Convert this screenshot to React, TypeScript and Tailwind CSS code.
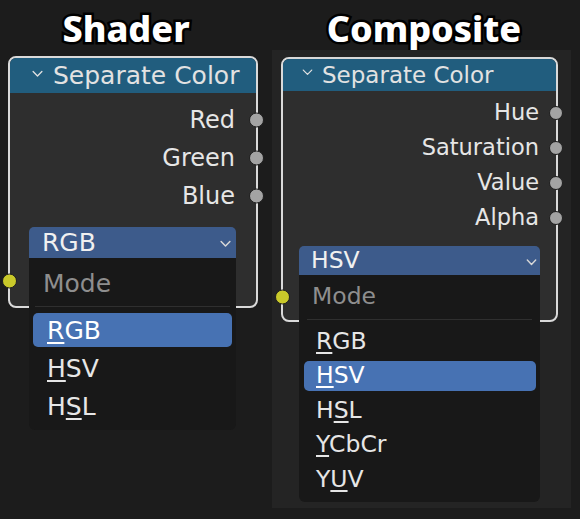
import React from "react";

type Cfg = {
  title: string;
  outputs: string[];
  current: string;
  items: { pre: string; u: string; post: string; sel?: boolean }[];
  c: {
    node: string;
    header: string;
    headerText: string;
    chev: string;
    body: string;
    row: string;
    rowText: string;
    sock: string;
    dd: string;
    ddText: string;
    ddChev: string;
    inRow: string;
    ysock: string;
    menu: string;
    mode: string;
    sep: string;
    list: string;
    item: string;
    itemText: string;
  };
};

const Chevron = ({ className, w = 1.6 }: { className: string; w?: number }) => (
  <svg viewBox="0 0 12 8" className={className} fill="none">
    <polyline
      points="1.2,1.2 6,6.2 10.8,1.2"
      stroke="currentColor"
      strokeWidth={w}
      strokeLinecap="round"
      strokeLinejoin="round"
    />
  </svg>
);

function Node({ cfg }: { cfg: Cfg }) {
  const c = cfg.c;
  return (
    <div className={`relative rounded-[8px] border-2 border-[#dadada] bg-[#2e2e2e] ${c.node}`}>
      <div className={`flex items-center rounded-t-[6px] bg-[#215d7e] text-[#e2e2e2] ${c.header}`}>
        <Chevron className={`shrink-0 text-[#e2e2e2] ${c.chev}`} w={1.4} />
        <span className={`leading-none whitespace-nowrap ${c.headerText}`}>Separate Color</span>
      </div>
      <div className={`flex flex-col ${c.body}`}>
        {cfg.outputs.map((o) => (
          <div key={o} className={`relative flex items-center justify-end ${c.row}`}>
            <span className={`leading-none text-[#e6e6e6] ${c.rowText}`}>{o}</span>
            <span
              className={`absolute top-1/2 -translate-y-1/2 rounded-full bg-[#a3a3a3] border border-[#1e1e1e] ${c.sock}`}
            />
          </div>
        ))}
        <div className={`relative z-10 ${c.dd}`}>
          <div className={`flex h-full items-center justify-between rounded-t-[5px] bg-[#3d5b8b] text-[#f0f0f0] ${c.ddText}`}>
            <span className="leading-none">{cfg.current}</span>
            <Chevron className={`text-[#d8d8d8] ${c.ddChev}`} />
          </div>
          <div className={`absolute left-0 right-0 top-full flex flex-col rounded-b-[6px] bg-[#181818] ${c.menu}`}>
            <div className={`flex items-center leading-none text-[#8e8e8e] ${c.mode}`}>Mode</div>
            <div className={`h-px bg-[#2f2f2f] ${c.sep}`} />
            <div className={`flex flex-col ${c.list}`}>
              {cfg.items.map((it) => (
                <div
                  key={it.pre + it.u + it.post}
                  className={`flex items-center rounded-[5px] leading-none ${c.item} ${
                    it.sel ? "bg-[#4772b3] text-white" : "text-[#e6e6e6]"
                  } ${c.itemText}`}
                >
                  <span>
                    {it.pre}
                    <span className="underline decoration-[1.5px] underline-offset-[3px]">{it.u}</span>
                    {it.post}
                  </span>
                </div>
              ))}
            </div>
          </div>
        </div>
        <div className={`relative ${c.inRow}`}>
          <span
            className={`absolute top-1/2 -translate-y-1/2 rounded-full bg-[#c9c92a] border border-[#1e1e1e] ${c.ysock}`}
          />
        </div>
      </div>
    </div>
  );
}

const left: Cfg = {
  title: "Shader",
  outputs: ["Red", "Green", "Blue"],
  current: "RGB",
  items: [
    { pre: "", u: "R", post: "GB", sel: true },
    { pre: "", u: "H", post: "SV" },
    { pre: "H", u: "S", post: "L" },
  ],
  c: {
    node: "ml-[8px] mt-[9px] w-[250px]",
    header: "h-[35px] pl-[22px] gap-[10px]",
    headerText: "text-[25px]",
    chev: "w-[11px] h-[8px] -mt-[3px]",
    body: "pt-[8px] pb-[6px]",
    row: "h-[38px] pr-[21px]",
    rowText: "text-[24px]",
    sock: "right-[-8px] w-[15px] h-[15px]",
    dd: "mt-[12px] ml-[19px] mr-[20px] h-[31px]",
    ddText: "pl-[13px] pr-[5px] text-[25px]",
    ddChev: "w-[11px] h-[8px] mt-[3px]",
    inRow: "mt-[4px] h-[38px]",
    ysock: "left-[-8px] w-[15px] h-[15px]",
    menu: "pt-[6px] pb-[7px]",
    mode: "h-[38px] pl-[14px] text-[25px]",
    sep: "mt-[4px] mx-[6px]",
    list: "mt-[6px] gap-[4px] px-[4px]",
    item: "h-[34px] pl-[14px]",
    itemText: "text-[25px]",
  },
};

const right: Cfg = {
  title: "Composite",
  outputs: ["Hue", "Saturation", "Value", "Alpha"],
  current: "HSV",
  items: [
    { pre: "", u: "R", post: "GB" },
    { pre: "", u: "H", post: "SV", sel: true },
    { pre: "H", u: "S", post: "L" },
    { pre: "", u: "Y", post: "CbCr" },
    { pre: "Y", u: "U", post: "V" },
  ],
  c: {
    node: "ml-[9px] mt-[7px] w-[277px]",
    header: "h-[32px] pl-[19px] gap-[9px]",
    headerText: "text-[23px]",
    chev: "w-[11px] h-[7px] -mt-[5px]",
    body: "pt-[4px] pb-[6px]",
    row: "h-[35px] pr-[17px]",
    rowText: "text-[22.5px]",
    sock: "right-[-7px] w-[14px] h-[14px]",
    dd: "mt-[11px] ml-[16px] mr-[16px] h-[29px]",
    ddText: "pl-[12px] pr-[3px] text-[23.5px]",
    ddChev: "w-[11px] h-[7px] mt-[3px]",
    inRow: "mt-[4px] h-[35px]",
    ysock: "left-[-8px] w-[15px] h-[15px]",
    menu: "pt-[5px] pb-[7.5px]",
    mode: "h-[34px] pl-[13px] text-[23.5px]",
    sep: "mt-[4.5px] mx-[8px]",
    list: "mt-[7px] gap-[4.5px] pl-[5px] pr-[4px]",
    item: "h-[30px] pl-[12px]",
    itemText: "text-[23.5px]",
  },
};

const Title = ({ text }: { text: string }) => (
  <div className="h-[38px] pt-[1px] text-center text-[36px] leading-[38px] font-extrabold text-white font-['Noto_Sans',sans-serif] [-webkit-text-stroke:5px_#000] [paint-order:stroke_fill]">
    {text}
  </div>
);

export default function App() {
  return (
    <div className="flex w-[580px] h-[519px] overflow-hidden bg-[#1c1c1c] font-['DejaVu_Sans',sans-serif]">
      <div className="flex w-[272px] flex-col pt-[9px]">
        <div className="w-[252px]">
          <Title text="Shader" />
        </div>
        <Node cfg={left} />
      </div>
      <div className="flex w-[299px] flex-col pt-[9px]">
        <div className="pl-[5px]">
          <Title text="Composite" />
        </div>
        <div className="mt-[3px] h-[458px] bg-[#242424]">
          <Node cfg={right} />
        </div>
      </div>
    </div>
  );
}
